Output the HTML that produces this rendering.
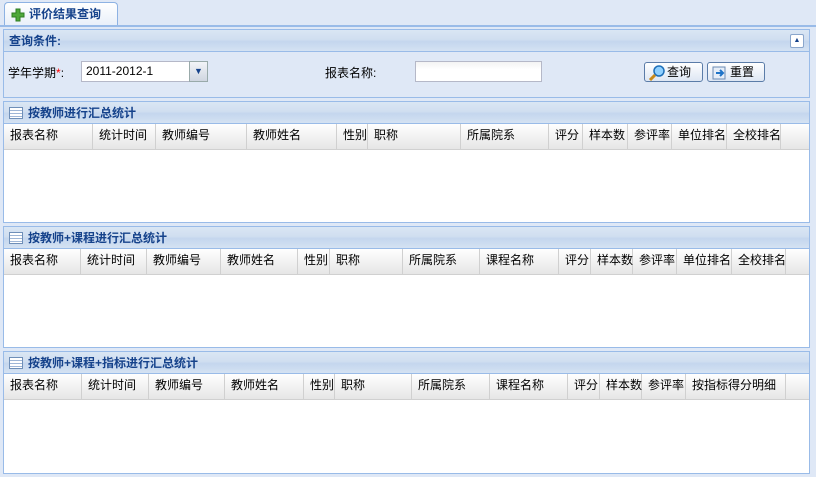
<!DOCTYPE html>
<html><head><meta charset="utf-8"><style>
*{margin:0;padding:0;box-sizing:border-box}
body{width:816px;height:477px;background:#dfe8f6;font:12px "Liberation Sans","Noto Sans CJK SC","WenQuanYi Zen Hei",sans-serif;color:#000;position:relative;overflow:hidden}
.abs{position:absolute}
.tab{left:4px;top:2px;width:114px;height:24px;border:1px solid #8db2e3;border-bottom:none;border-radius:4px 4px 0 0;background:linear-gradient(#fff,#e8eff9);font-weight:bold;color:#15428b;padding:2px 0 0 24px}
.tabline{left:0;top:25px;width:816px;height:2px;background:#99bbe8}
.panel{left:3px;width:807px;border:1px solid #99bbe8;background:#fff}
.hd{height:22px;background:linear-gradient(#dae6f4 0%,#d0def0 45%,#c4d6ee 55%,#d4e2f2 100%);border-bottom:1px solid #99bbe8;font-weight:bold;color:#15428b;padding:2px 0 0 5px;position:relative}
.hd .ic{position:absolute;left:5px;top:5px;width:14px;height:12px;border:1px solid #6f8fb8;background:repeating-linear-gradient(#fff 0 2px,#9fb6d6 2px 3px)}
.hd.g{padding-left:24px}
.cols{height:26px;background:linear-gradient(#fff,#f0f0f0 60%,#e6e6e6);border-bottom:1px solid #d0d0d0;position:relative}
.cols span{position:absolute;top:0;height:25px;line-height:23px;padding-left:6px;border-right:1px solid #d0d0d0;white-space:nowrap}
.q{background:#dfe8f6}
.btn{height:20px;border:1px solid #5b7ca8;border-radius:3px;background:linear-gradient(#fff,#dde6f3);padding:0 0 0 22px}
</style></head><body>
<div class="abs tab"><svg class="abs" style="left:6px;top:5px" width="14" height="14"><path d="M5 1h4v4h4v4h-4v4h-4v-4h-4v-4h4z" fill="#4fa83a" stroke="#2e7d22"/></svg>评价结果查询</div>
<div class="abs tabline"></div>

<div class="abs panel q" style="top:29px;height:69px">
<div class="hd">查询条件:<div class="abs" style="right:5px;top:4px;width:14px;height:14px;border:1px solid #8aa6cc;border-radius:2px;background:#fff;font-size:7px;text-align:center;line-height:12px;color:#15428b">▲</div></div>
<div class="abs" style="left:4px;top:34px">学年学期<span style="color:red">*</span>:</div>
<div class="abs" style="left:77px;top:31px;width:111px;height:21px;border:1px solid #b5b8c8;background:#fff;padding:2px 0 0 4px">2011-2012-1</div>
<div class="abs" style="left:185px;top:31px;width:19px;height:21px;border:1px solid #9aa;background:linear-gradient(#f2f4f8,#cfd6e0);text-align:center;font-size:9px;line-height:19px;color:#15428b">▼</div>
<div class="abs" style="left:321px;top:34px">报表名称:</div>
<div class="abs" style="left:411px;top:31px;width:127px;height:21px;border:1px solid #b5b8c8;background:linear-gradient(#f3f3f3,#fff 40%)"></div>
<div class="abs btn" style="left:640px;top:32px;width:59px"><svg class="abs" style="left:3px;top:1px" width="18" height="17"><circle cx="11" cy="7" r="5" fill="#8fd0ff" stroke="#1e6fb8" stroke-width="1.5"/><path d="M7 11l-5 5" stroke="#c98a1a" stroke-width="3"/></svg>查询</div>
<div class="abs btn" style="left:703px;top:32px;width:58px"><svg class="abs" style="left:3px;top:1px" width="18" height="17"><rect x="2" y="3" width="12" height="12" fill="#e6eef8" stroke="#6b8bb3"/><path d="M5 9h6M9 6l3 3-3 3" stroke="#1f74c8" stroke-width="2" fill="none"/></svg>重置</div>
</div>

<div class="abs panel" style="top:101px;height:122px">
<div class="hd g"><div class="ic"></div>按教师进行汇总统计</div>
<div class="cols">
<span style="left:0;width:89px">报表名称</span><span style="left:89px;width:63px">统计时间</span><span style="left:152px;width:91px">教师编号</span><span style="left:243px;width:90px">教师姓名</span><span style="left:333px;width:31px">性别</span><span style="left:364px;width:93px">职称</span><span style="left:457px;width:88px">所属院系</span><span style="left:545px;width:34px">评分</span><span style="left:579px;width:45px">样本数</span><span style="left:624px;width:44px">参评率</span><span style="left:668px;width:55px">单位排名</span><span style="left:723px;width:54px">全校排名</span>
</div></div>

<div class="abs panel" style="top:226px;height:122px">
<div class="hd g"><div class="ic"></div>按教师+课程进行汇总统计</div>
<div class="cols">
<span style="left:0;width:77px">报表名称</span><span style="left:77px;width:66px">统计时间</span><span style="left:143px;width:74px">教师编号</span><span style="left:217px;width:77px">教师姓名</span><span style="left:294px;width:32px">性别</span><span style="left:326px;width:73px">职称</span><span style="left:399px;width:77px">所属院系</span><span style="left:476px;width:79px">课程名称</span><span style="left:555px;width:32px">评分</span><span style="left:587px;width:42px">样本数</span><span style="left:629px;width:44px">参评率</span><span style="left:673px;width:55px">单位排名</span><span style="left:728px;width:54px">全校排名</span>
</div></div>

<div class="abs panel" style="top:351px;height:123px">
<div class="hd g"><div class="ic"></div>按教师+课程+指标进行汇总统计</div>
<div class="cols">
<span style="left:0;width:78px">报表名称</span><span style="left:78px;width:67px">统计时间</span><span style="left:145px;width:76px">教师编号</span><span style="left:221px;width:79px">教师姓名</span><span style="left:300px;width:31px">性别</span><span style="left:331px;width:77px">职称</span><span style="left:408px;width:78px">所属院系</span><span style="left:486px;width:78px">课程名称</span><span style="left:564px;width:32px">评分</span><span style="left:596px;width:42px">样本数</span><span style="left:638px;width:44px">参评率</span><span style="left:682px;width:100px">按指标得分明细</span>
</div></div>
</body></html>
